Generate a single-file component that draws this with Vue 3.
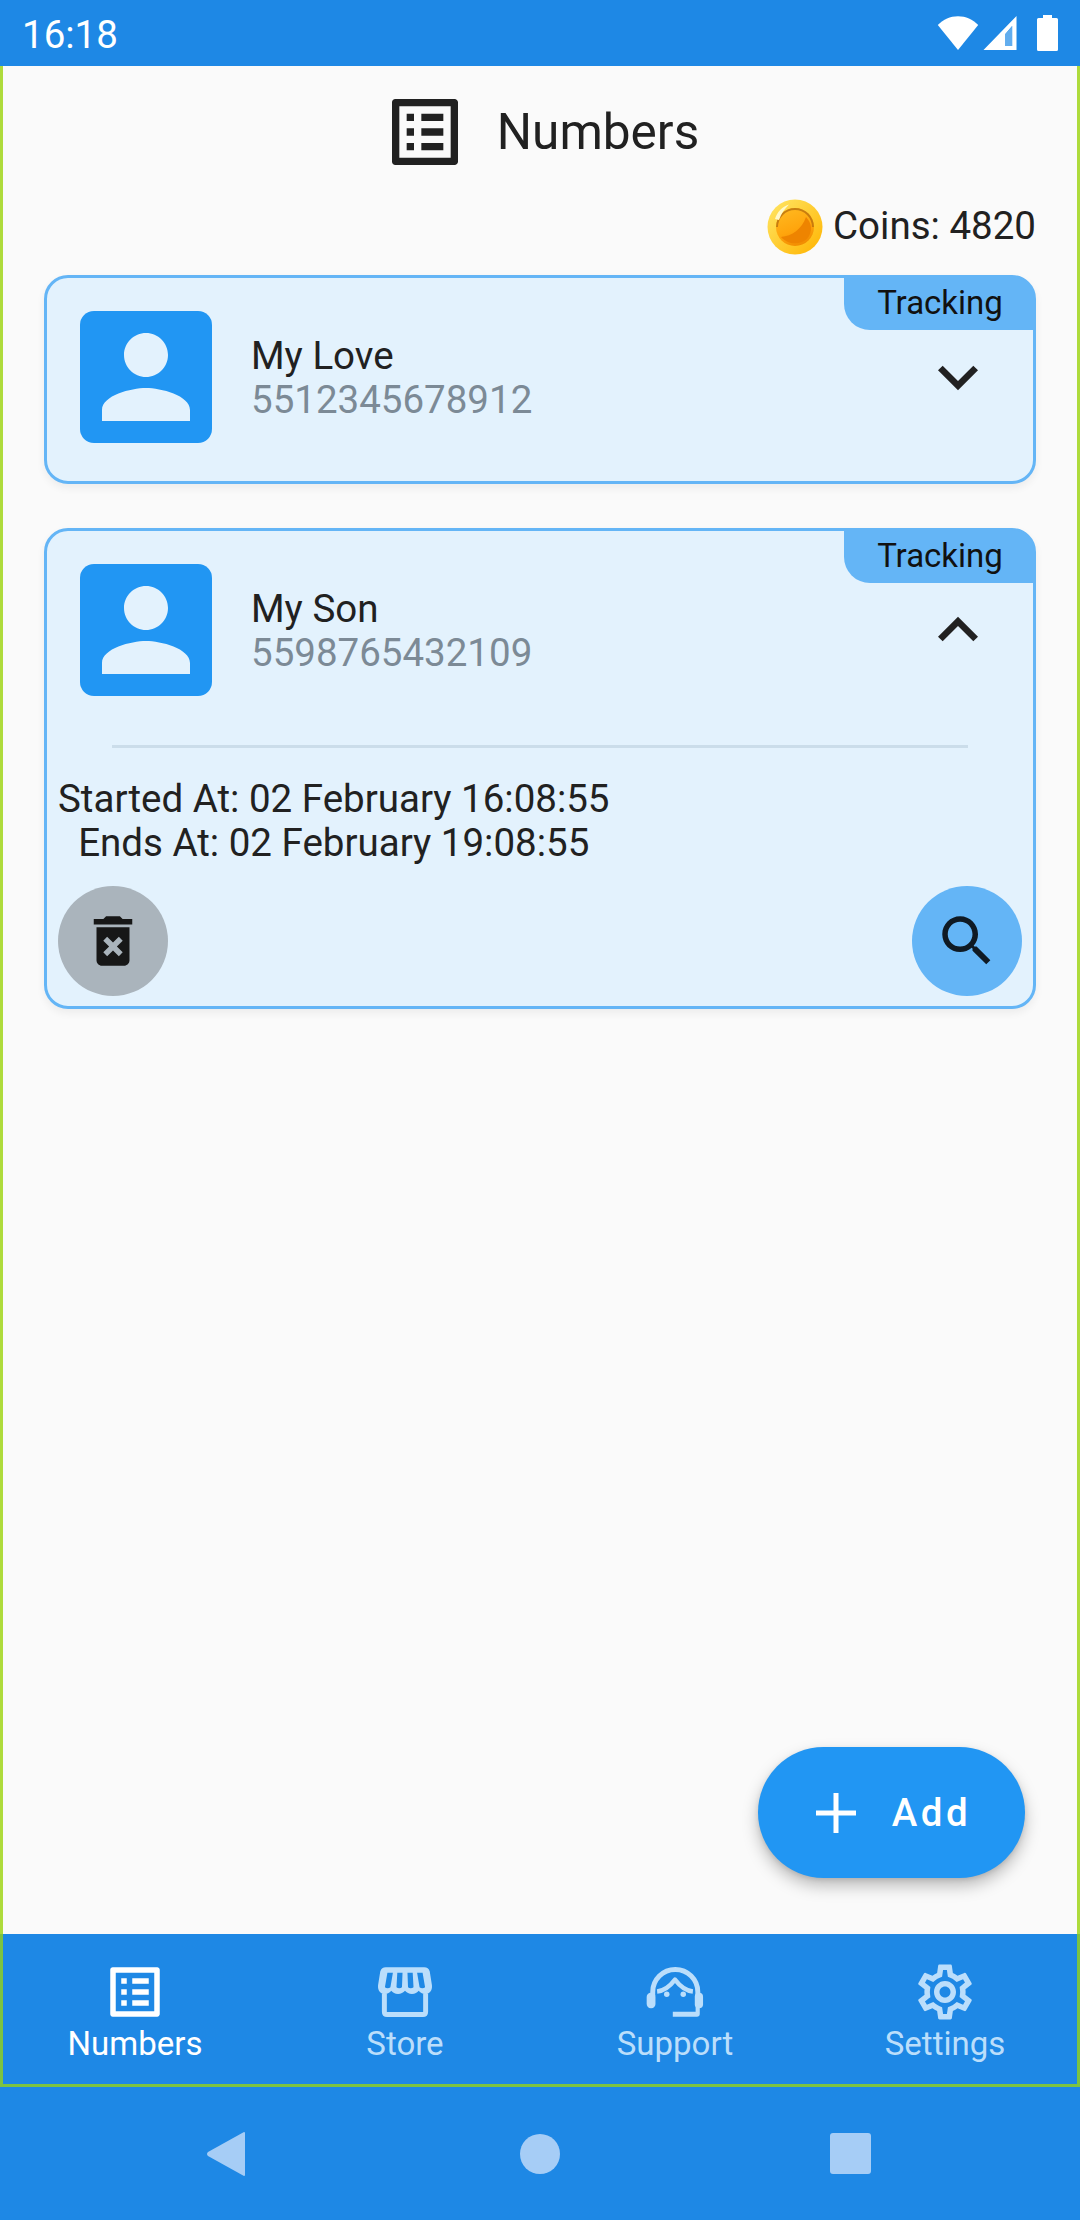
<script setup>
const navItems = [
  { label: 'Numbers', icon: 'list', active: true },
  { label: 'Store', icon: 'store', active: false },
  { label: 'Support', icon: 'support', active: false },
  { label: 'Settings', icon: 'settings', active: false }
]
</script>

<template>
  <div class="page">
    <div class="status">
      <span class="time">16:18</span>
      <div class="status-icons">
        <svg class="wifi" width="42" height="34" viewBox="0 0 42 34"><path d="M21 34 .8 9C6.500 3.500 13 .3 21 .3S35.500 3.500 41.200 9z" fill="#fff"/></svg>
        <svg class="signal" width="34" height="34" viewBox="0 0 35 34" preserveAspectRatio="none"><path fill-rule="evenodd" d="M34.500 0V34H.5zM23 18V30h7V10z" fill="#fff"/><path d="M23 18V30h7V10z" fill="#62ADEE"/></svg>
        <svg class="battery" width="21" height="36" viewBox="0 0 21 36"><path d="M6 0h9v3h4.500A1.500 1.500 0 0 1 21 4.500V34.500A1.500 1.500 0 0 1 19.500 36H1.500A1.500 1.500 0 0 1 0 34.500V4.500A1.500 1.500 0 0 1 1.500 3H6z" fill="#fff"/></svg>
      </div>
    </div>

    <main class="main">
      <header class="title-row">
        <svg class="title-icon" width="88" height="88" viewBox="0 0 24 24"><path fill="#212121" d="M19 5v14H5V5h14m1.100-2H3.900c-.5 0-.9.4-.9.9v16.200c0 .4.4.9.9.9h16.200c.4 0 .9-.5.9-.9V3.900c0-.5-.5-.9-.9-.9zM11 7h6v2h-6V7zm0 4h6v2h-6v-2zm0 4h6v2h-6zM7 7h2v2H7zm0 4h2v2H7zm0 4h2v2H7z"/></svg>
        <h1 class="title">Numbers</h1>
      </header>

      <div class="coins">
        <svg width="56" height="56" viewBox="0 0 56 56">
          <defs>
            <linearGradient id="rim" x1="0" y1="0" x2="1" y2="1"><stop offset="0" stop-color="#FFE766"/><stop offset="1" stop-color="#FFB300"/></linearGradient>
            <linearGradient id="face" x1="0.3" y1="0" x2="0.7" y2="1"><stop offset="0" stop-color="#FFB81F"/><stop offset=".55" stop-color="#FFA50D"/><stop offset="1" stop-color="#F08A00"/></linearGradient>
          </defs>
          <circle cx="28" cy="28" r="27.500" fill="url(#rim)"/>
          <circle cx="28" cy="28" r="19" fill="url(#face)"/>
          <path d="M9 28a19 19 0 0 1 38 0h-2a17 17 0 0 0-34 0z" fill="#B9700E" opacity=".8"/>
          <path d="M14 38C25 37 35 30 39 18c6 6 7 15 1 22-7 6-19 6-26-2z" fill="#EE8400"/>
          <path d="M8 20C10 13 15 8 22 5.500c-4 4-8 9-10 15.500z" fill="#FFF8C8"/>
        </svg>
        <span class="coin-text">Coins: 4820</span>
      </div>

      <section class="card first">
        <span class="badge">Tracking</span>
        <div class="card-head">
          <div class="avatar">
            <svg width="132" height="132" viewBox="0 0 24 24"><path fill="#E3F2FD" d="M12 12c2.210 0 4-1.790 4-4s-1.790-4-4-4-4 1.790-4 4 1.790 4 4 4zm0 2c-2.670 0-8 1.340-8 4v2h16v-2c0-2.660-5.330-4-8-4z"/></svg>
          </div>
          <div class="who">
            <div class="name">My Love</div>
            <div class="phone">5512345678912</div>
          </div>
          <svg class="chevron" width="80" height="80" viewBox="0 0 24 24"><path fill="#212121" d="M16.590 8.590L12 13.170 7.410 8.590 6 10l6 6 6-6z"/></svg>
        </div>
      </section>

      <section class="card second">
        <span class="badge">Tracking</span>
        <div class="card-head">
          <div class="avatar">
            <svg width="132" height="132" viewBox="0 0 24 24"><path fill="#E3F2FD" d="M12 12c2.210 0 4-1.790 4-4s-1.790-4-4-4-4 1.790-4 4 1.790 4 4 4zm0 2c-2.670 0-8 1.340-8 4v2h16v-2c0-2.660-5.330-4-8-4z"/></svg>
          </div>
          <div class="who">
            <div class="name">My Son</div>
            <div class="phone">5598765432109</div>
          </div>
          <svg class="chevron" width="80" height="80" viewBox="0 0 24 24"><path fill="#212121" d="M12 8l-6 6 1.410 1.410L12 10.830l4.590 4.580L18 14z"/></svg>
        </div>
        <div class="divider"></div>
        <div class="dates">
          <div>Started At: 02 February 16:08:55</div>
          <div>Ends At: 02 February 19:08:55</div>
        </div>
        <div class="actions">
          <button class="round grey">
            <svg width="66" height="66" viewBox="0 0 24 24"><path fill="#171717" d="M6 19c0 1.100.9 2 2 2h8c1.100 0 2-.9 2-2V7H6v12zm2.460-7.120l1.410-1.410L12 12.590l2.120-2.120 1.410 1.410L13.410 14l2.120 2.120-1.410 1.410L12 15.410l-2.120 2.120-1.410-1.410L10.590 14l-2.130-2.120zM15.500 4l-1-1h-5l-1 1H5v2h14V4z"/></svg>
          </button>
          <button class="round blue">
            <svg width="66" height="66" viewBox="0 0 24 24"><path fill="#0F1A24" d="M15.500 14h-.79l-.28-.27C15.410 12.590 16 11.110 16 9.500 16 5.910 13.090 3 9.500 3S3 5.910 3 9.500 5.910 16 9.500 16c1.610 0 3.090-.59 4.230-1.570l.27.28v.79l5 4.990L20.490 19l-4.990-5zm-6 0C7.010 14 5 11.990 5 9.500S7.010 5 9.500 5 14 7.010 14 9.500 11.990 14 9.500 14z"/></svg>
          </button>
        </div>
      </section>

      <button class="fab">
        <svg width="40" height="40" viewBox="0 0 40 40"><path fill="#fff" d="M17.500 0h5v17.500H40v5H22.500V40h-5V22.500H0v-5h17.500z"/></svg>
        <span>Add</span>
      </button>
    </main>

    <nav class="nav">
      <div v-for="item in navItems" :key="item.label" class="nav-item" :class="{ active: item.active }">
        <svg width="66" height="66" viewBox="0 0 24 24" class="nav-icon">
          <path v-if="item.icon === 'list'" fill="currentColor" fill-rule="evenodd" d="M3.900 3h16.200c.4 0 .9.4.9.9v16.200c0 .4-.5.9-.9.9H3.900c-.5 0-.9-.5-.9-.9V3.900c0-.5.4-.9.9-.9zM5 5v14h14V5zM11 7h6v2h-6zm0 4h6v2h-6zm0 4h6v2h-6zM7 7h2v2H7zm0 4h2v2H7zm0 4h2v2H7z"/>
          <g v-else-if="item.icon === 'store'">
            <path fill="currentColor" fill-rule="evenodd" d="M5 3h14q1.500 0 2 1.500l.8 5c.2 2-1 3.200-2.500 3.200-1 0-1.800-.5-2.300-1.200-.6.7-1.300 1.200-2.500 1.200-1 0-1.900-.5-2.500-1.200-.6.7-1.500 1.200-2.500 1.200-1.200 0-1.900-.5-2.500-1.200-.5.7-1.300 1.200-2.300 1.200-1.500 0-2.700-1.200-2.500-3.200l.8-5Q3.500 3 5 3zM5.600 5 4.700 10.300c.5.5 1.500.5 2 0L7.600 5zM9.200 5 8.900 10.300c.5.5 1.500.5 2 0L11.100 5zM12.900 5 13.100 10.300c.5.5 1.500.5 2 0L14.800 5zM16.400 5 17.300 10.300c.5.5 1.500.5 2 0L18.400 5z"/>
            <path fill="none" stroke="currentColor" stroke-width="1.800" d="M4.500 12.500V19.200c0 .6.4 1 1 1h13c.6 0 1-.4 1-1V12.500"/>
          </g>
          <g v-else-if="item.icon === 'support'">
            <path fill="none" stroke="currentColor" stroke-width="1.800" d="M3.900 13.500V12a8.200 8.200 0 0 1 16.400 0v1.500"/>
            <path fill="none" stroke="currentColor" stroke-width="1.600" stroke-linejoin="round" d="M5.500 11.800C8.500 11.500 10.500 9.500 12 7.500c1.500 2 3.500 4 6.500 4.300"/>
            <rect x="1.700" y="12.300" width="3.200" height="5.600" rx="1.500" fill="currentColor"/>
            <rect x="19.200" y="12.300" width="3" height="5.600" rx="1.450" fill="currentColor"/>
            <circle cx="9" cy="12.800" r="1" fill="currentColor"/>
            <circle cx="15" cy="12.800" r="1" fill="currentColor"/>
            <path fill="currentColor" d="M11.200 19.200h8.300v-2h1.500v2.800c0 .6-.4 1-1 1h-8.800z"/>
          </g>
          <path v-else fill="currentColor" d="M19.430 12.980c.04-.32.070-.64.070-.98 0-.34-.03-.66-.07-.98l2.110-1.650c.19-.15.240-.42.120-.64l-2-3.460c-.09-.16-.26-.25-.44-.25-.06 0-.12.010-.17.030l-2.490 1c-.52-.4-1.080-.73-1.690-.98l-.38-2.650C14.460 2.180 14.250 2 14 2h-4c-.25 0-.46.180-.49.420l-.38 2.650c-.61.250-1.170.590-1.690.98l-2.490-1c-.06-.02-.12-.03-.18-.03-.17 0-.34.090-.43.250l-2 3.460c-.13.220-.07.490.12.640l2.110 1.650c-.04.320-.07.650-.07.980 0 .33.030.66.070.98l-2.110 1.650c-.19.150-.24.420-.12.640l2 3.460c.09.160.26.250.44.250.06 0 .12-.01.170-.03l2.490-1c.52.400 1.080.73 1.690.98l.38 2.650c.03.240.24.420.49.420h4c.25 0 .46-.18.490-.42l.38-2.650c.61-.25 1.170-.59 1.690-.98l2.490 1c.06.020.12.030.18.030.17 0 .34-.09.43-.25l2-3.460c.12-.22.070-.49-.12-.64l-2.110-1.650zm-1.980-1.710c.04.310.05.520.05.730 0 .21-.02.430-.05.730l-.14 1.130.89.700 1.080.84-.7 1.210-1.270-.51-1.040-.42-.9.680c-.43.320-.84.560-1.250.73l-1.060.43-.16 1.130-.2 1.350h-1.400l-.19-1.350-.16-1.130-1.060-.43c-.43-.18-.83-.41-1.230-.71l-.91-.7-1.060.43-1.270.51-.7-1.210 1.080-.84.890-.7-.14-1.130c-.03-.31-.05-.54-.05-.74s.02-.43.05-.73l.14-1.130-.89-.7-1.080-.84.7-1.210 1.270.51 1.040.42.9-.68c.43-.32.84-.56 1.250-.73l1.060-.43.16-1.130.2-1.350h1.390l.19 1.350.16 1.130 1.060.43c.43.18.83.41 1.230.71l.91.7 1.060-.43 1.270-.51.7 1.210-1.070.85-.89.7.14 1.130zM12 8c-2.210 0-4 1.790-4 4s1.790 4 4 4 4-1.790 4-4-1.790-4-4-4zm0 6c-1.100 0-2-.9-2-2s.9-2 2-2 2 .9 2 2-.9 2-2 2z"/>
        </svg>
        <span class="nav-label">{{ item.label }}</span>
      </div>
    </nav>

    <div class="sysbar">
      <svg width="38" height="46" viewBox="0 0 38 46"><path fill="#A6CDF6" d="M38 1.500V44.500L37 45 1 25C-.3 23.700-.3 22.300 1 21L37 1z"/></svg>
      <div class="sys-circle"></div>
      <div class="sys-square"></div>
    </div>
  </div>
</template>

<style>
html, body { margin: 0; padding: 0; background: #FAFAFA; }
</style>

<style scoped>
.page {
  width: 1080px;
  height: 2220px;
  display: flex;
  flex-direction: column;
  font-family: Roboto, "Liberation Sans", sans-serif;
  color: #212121;
  overflow: hidden;
}
.status {
  height: 66px;
  background: #1E88E5;
  display: flex;
  align-items: center;
  justify-content: space-between;
  padding: 0 22px;
  flex: none;
  box-sizing: border-box;
}
.time { color: #fff; font-size: 38.500px; padding-top: 2px; }
.status-icons { display: flex; align-items: center; }
.signal { margin-left: 4px; }
.battery { margin-left: 20px; }

.main {
  flex: 1;
  position: relative;
  background: #FAFAFA;
  border-left: 3px solid #AEDB3C;
  border-right: 3px solid #AEDB3C;
  padding: 0 41px;
  min-height: 0;
}
.title-row {
  height: 88px;
  margin-top: 22px;
  display: flex;
  align-items: center;
  justify-content: center;
  gap: 28px;
}
.title {
  margin: 0;
  font-size: 49.500px;
  font-weight: 400;
  color: #212121;
}
.coins {
  margin-top: 23px;
  height: 56px;
  display: flex;
  align-items: center;
  justify-content: flex-end;
  gap: 10px;
  font-size: 38.500px;
}
.coin-text { padding-bottom: 3px; }
.card {
  position: relative;
  box-sizing: border-box;
  background: #E3F2FD;
  border: 3px solid #64B5F6;
  border-radius: 24px;
  box-shadow: 0 4px 8px rgba(0, 0, 0, .06);
}
.first { height: 209px; margin-top: 20px; }
.second { height: 481px; margin-top: 44px; }
.badge {
  position: absolute;
  top: -1px;
  right: -1px;
  width: 190px;
  height: 53px;
  box-sizing: border-box;
  padding: 0 0 2px 2px;
  background: #64B5F6;
  border-radius: 0 22px 0 26px;
  display: flex;
  align-items: center;
  justify-content: center;
  font-size: 33px;
  color: #111;
}
.card-head {
  display: flex;
  align-items: center;
  padding: 33px 35px 0 33px;
}
.avatar {
  width: 132px;
  height: 132px;
  background: #2196F3;
  border-radius: 14px;
  flex: none;
}
.avatar svg { display: block; }
.who { margin-left: 39px; flex: 1; padding-top: 2px; }
.name { font-size: 38.500px; line-height: 44px; color: #212121; }
.phone { font-size: 38.500px; line-height: 44px; color: #7C8A96; }
.chevron { flex: none; }
.divider {
  height: 3px;
  background: #CBDDEA;
  margin: 49px 65px 0;
}
.dates {
  margin: 29px 0 0 11px;
  display: inline-block;
  text-align: center;
  font-size: 38.500px;
  line-height: 44px;
  color: #212121;
}
.actions {
  display: flex;
  justify-content: space-between;
  padding: 0 11px;
  margin-top: 21px;
}
.round {
  width: 110px;
  height: 110px;
  border: 0;
  padding: 0;
  border-radius: 50%;
  display: flex;
  align-items: center;
  justify-content: center;
}
.grey { background: #AAB4BC; }
.blue { background: #64B5F6; }
.fab {
  position: absolute;
  right: 52px;
  bottom: 56px;
  width: 267px;
  height: 131px;
  border: 0;
  border-radius: 66px;
  padding: 0 0 0 4px;
  background: #2196F3;
  color: #fff;
  display: flex;
  align-items: center;
  justify-content: center;
  gap: 36px;
  font-family: Roboto, sans-serif;
  font-size: 38.500px;
  font-weight: 500;
  letter-spacing: 3.500px;
  box-shadow: 0 8px 16px rgba(0, 0, 0, .25), 0 2px 5px rgba(0, 0, 0, .1);
}
.nav {
  flex: none;
  height: 153px;
  box-sizing: border-box;
  background: #1E88E5;
  box-shadow: inset 3px 0 #7CC341, inset -3px 0 #7CC341, inset 0 -3px #7CC341;
  display: grid;
  grid-template-columns: repeat(4, 1fr);
}
.nav-item {
  display: flex;
  flex-direction: column;
  align-items: center;
  padding-top: 25px;
  color: #BBDEFB;
}
.nav-item.active { color: #fff; }
.nav-label { font-size: 33px; line-height: 38px; }
.sysbar {
  flex: none;
  height: 133px;
  background: #1E88E5;
  display: flex;
  align-items: center;
  justify-content: space-between;
  padding: 0 209px 0 207px;
}
.sys-circle { width: 40px; height: 40px; border-radius: 50%; background: #A6CDF6; margin-left: 5px; }
.sys-square { width: 41px; height: 41px; border-radius: 3px; background: #A6CDF6; }
</style>
